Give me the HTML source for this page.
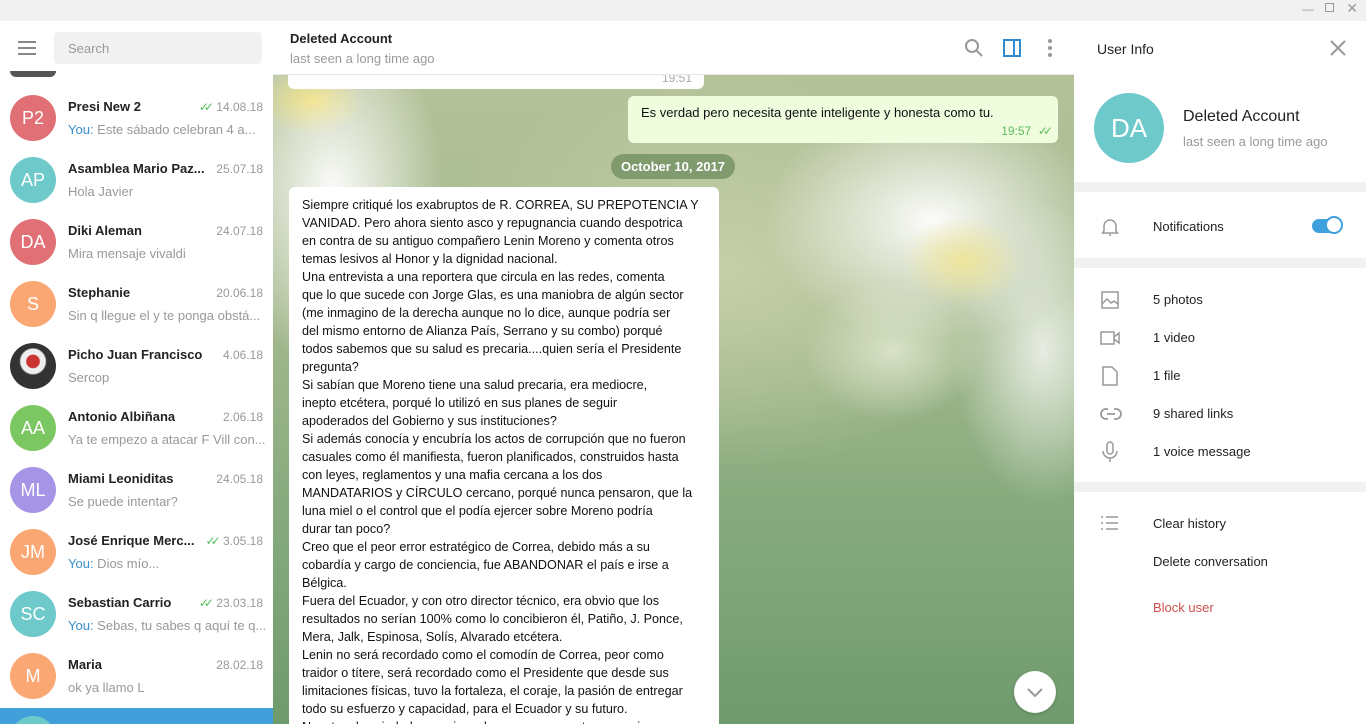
<!DOCTYPE html>
<html><head><meta charset="utf-8"><style>
*{margin:0;padding:0;box-sizing:border-box}
body{width:1366px;height:724px;overflow:hidden;font-family:"Liberation Sans",sans-serif;background:#fff;position:relative;font-size:13px;color:#000}
.tb{position:absolute;left:0;top:0;width:1366px;height:21px;background:#f1f1f1}
.left{position:absolute;left:0;top:21px;width:273px;height:703px;background:#fff;overflow:hidden}
.search{position:absolute;left:54px;top:11px;width:208px;height:32px;background:#f1f1f1;border-radius:4px;color:#999;font-size:13px;padding:9px 0 0 14px}
.ham{position:absolute;left:18px;top:20px;width:18px}
.ham i{display:block;height:2px;background:#888;margin-bottom:4px}
.row{position:absolute;left:0;width:273px;height:62px}
.av{position:absolute;left:10px;top:8px;width:46px;height:46px;border-radius:50%;color:#fff;font-size:18px;text-align:center;line-height:46px}
.nm{position:absolute;left:68px;top:12px;font-weight:bold;font-size:13px;color:#222;white-space:nowrap}
.dt{position:absolute;right:10px;top:13px;font-size:12px;color:#999}
.ms{position:absolute;left:68px;top:35px;font-size:13px;color:#999;white-space:nowrap;width:197px;overflow:hidden}
.ms b{font-weight:normal;color:#3a8fcf}
.ck{color:#4dbe56;font-size:12px;margin-right:4px;letter-spacing:-5px}
.chat{position:absolute;left:273px;top:21px;width:801px;height:703px;overflow:hidden;
background:
radial-gradient(ellipse 60px 45px at 690px 240px,rgba(240,228,150,.9),rgba(240,230,150,0) 100%),
radial-gradient(ellipse 170px 120px at 660px 200px,rgba(255,255,255,.95),rgba(255,255,255,0) 100%),
radial-gradient(ellipse 90px 150px at 770px 330px,rgba(255,255,255,.75),rgba(255,255,255,0) 100%),
radial-gradient(ellipse 90px 70px at 620px 330px,rgba(235,240,220,.7),rgba(255,255,255,0) 100%),
radial-gradient(ellipse 110px 180px at 60px 170px,rgba(255,255,255,.95),rgba(255,255,255,0) 100%),
radial-gradient(ellipse 50px 35px at 40px 80px,#e8d040,rgba(232,208,64,0) 100%),
radial-gradient(ellipse 300px 200px at 450px 250px,#c6cfa8,rgba(201,210,172,0) 100%),
linear-gradient(180deg,#b8c49c 0%,#a5b98e 40%,#86aa7d 70%,#6f9b6d 100%);}
.chat>div{position:absolute}
.hdr{left:0;top:0;width:801px;height:54px;background:#fff;border-bottom:1px solid #e6e6e6;z-index:3}
.bub{background:#fff;border-radius:6px;font-size:13px;line-height:18px;color:#111;overflow:hidden}
.right{position:absolute;left:1074px;top:21px;width:292px;height:703px;background:#fff}
.sep{position:absolute;left:0;width:292px;height:10px;background:#f1f1f1}
.it{position:absolute;left:79px;font-size:13px;color:#222}
.ic{position:absolute;left:26px}
</style></head><body>
<div class="tb"><span style="position:absolute;right:52px;top:2px;color:#999;font-size:12px">—</span><span style="position:absolute;right:32px;top:3px;width:9px;height:9px;border:1px solid #999"></span><span style="position:absolute;right:8px;top:0;color:#999;font-size:14px">✕</span></div>
<div class="left">
<div class="ham"><i></i><i></i><i></i></div>
<div class="search">Search</div>
<div style="position:absolute;left:10px;top:50px;width:46px;height:6px;border-radius:0 0 23px 23px;background:#555"></div>
<div class="row" style="top:66px"><div class="av" style="background:#e17076">P2</div><div class="nm">Presi New 2</div><div class="dt"><span class="ck">✓✓</span> 14.08.18</div><div class="ms"><b>You:</b> Este sábado celebran 4 a...</div></div>
<div class="row" style="top:128px"><div class="av" style="background:#6ec9cb">AP</div><div class="nm">Asamblea Mario Paz...</div><div class="dt">25.07.18</div><div class="ms">Hola Javier</div></div>
<div class="row" style="top:190px"><div class="av" style="background:#e17076">DA</div><div class="nm">Diki Aleman</div><div class="dt">24.07.18</div><div class="ms">Mira mensaje vivaldi</div></div>
<div class="row" style="top:252px"><div class="av" style="background:#faa774">S</div><div class="nm">Stephanie</div><div class="dt">20.06.18</div><div class="ms">Sin q llegue el y te ponga obstá...</div></div>
<div class="row" style="top:314px"><div class="av" style="background:radial-gradient(circle at 50% 40%,#c33 0 18%,#eee 20% 34%,#333 38%)"></div><div class="nm">Picho Juan Francisco</div><div class="dt">4.06.18</div><div class="ms">Sercop</div></div>
<div class="row" style="top:376px"><div class="av" style="background:#7bc862">AA</div><div class="nm">Antonio Albiñana</div><div class="dt">2.06.18</div><div class="ms">Ya te empezo a atacar F Vill con...</div></div>
<div class="row" style="top:438px"><div class="av" style="background:#a695e7">ML</div><div class="nm">Miami Leoniditas</div><div class="dt">24.05.18</div><div class="ms">Se puede intentar?</div></div>
<div class="row" style="top:500px"><div class="av" style="background:#faa774">JM</div><div class="nm">José Enrique Merc...</div><div class="dt"><span class="ck">✓✓</span> 3.05.18</div><div class="ms"><b>You:</b> Dios mío...</div></div>
<div class="row" style="top:562px"><div class="av" style="background:#6ec9cb">SC</div><div class="nm">Sebastian Carrio</div><div class="dt"><span class="ck">✓✓</span> 23.03.18</div><div class="ms"><b>You:</b> Sebas, tu sabes q aquí te q...</div></div>
<div class="row" style="top:624px"><div class="av" style="background:#faa774">M</div><div class="nm">Maria</div><div class="dt">28.02.18</div><div class="ms">ok ya llamo L</div></div>
<div class="row" style="top:687px;height:16px;background:#419fd9;overflow:hidden"><div class="av" style="background:#6ec9cb"></div></div>
</div>
<div class="chat">
<div class="hdr"><div style="position:absolute;left:17px;top:10px;font-size:13px;font-weight:bold;color:#222">Deleted Account</div><div style="position:absolute;left:17px;top:30px;color:#999">last seen a long time ago</div>
<svg style="position:absolute;left:691px;top:17px" width="20" height="20" fill="none" stroke="#999" stroke-width="2"><circle cx="8" cy="8" r="6"/><path d="M12.5 12.5L18 18"/></svg>
<svg style="position:absolute;left:729px;top:17px" width="20" height="20" fill="none" stroke="#2f8ad0" stroke-width="2"><rect x="2" y="2" width="16" height="16"/><path d="M12 2v16"/></svg>
<div style="position:absolute;left:775px;top:18px;width:4px"><i style="display:block;width:4px;height:4px;border-radius:2px;background:#999;margin-bottom:3px"></i><i style="display:block;width:4px;height:4px;border-radius:2px;background:#999;margin-bottom:3px"></i><i style="display:block;width:4px;height:4px;border-radius:2px;background:#999"></i></div></div>
<div class="bub" style="left:15px;top:40px;width:416px;height:28px"><span style="position:absolute;right:12px;top:8px;font-size:12px;color:#aaa">19:51</span></div>
<div class="bub" style="left:355px;top:75px;width:430px;height:47px;background:#effdde"><div style="position:absolute;left:13px;top:8px">Es verdad pero necesita gente inteligente y honesta como tu.</div><div style="position:absolute;right:10px;top:26px;font-size:12px;color:#5dbb5c">19:57 &nbsp;<span style="letter-spacing:-5px">✓✓</span></div></div>
<div style="left:338px;top:133px;width:124px;height:25px;border-radius:13px;background:rgba(110,140,95,.75);color:#fff;font-weight:bold;font-size:13px;text-align:center;line-height:25px">October 10, 2017</div>
<div class="bub" style="left:16px;top:166px;width:430px;height:537px;border-radius:6px 6px 0 0;padding:9px 13px;white-space:nowrap;font-size:12.6px">Siempre critiqué los exabruptos de R. CORREA, SU PREPOTENCIA Y<br>VANIDAD. Pero ahora siento asco y repugnancia cuando despotrica<br>en contra de su antiguo compañero Lenin Moreno y comenta otros<br>temas lesivos al Honor y la dignidad nacional.<br>Una entrevista a una reportera que circula en las redes,  comenta<br>que lo que sucede con Jorge Glas, es una maniobra de algún sector<br>(me inmagino de la derecha aunque no lo dice, aunque podría ser<br>del mismo entorno de Alianza País, Serrano y su combo) porqué<br>todos sabemos que su salud es precaria....quien sería el Presidente<br>pregunta?<br>Si sabían que Moreno tiene una salud precaria, era mediocre,<br>inepto etcétera,  porqué lo utilizó en sus planes de seguir<br>apoderados del Gobierno y sus instituciones?<br>Si además conocía y encubría los actos de corrupción que no fueron<br>casuales como él manifiesta, fueron planificados, construidos hasta<br>con leyes, reglamentos y una mafia cercana a los dos<br>MANDATARIOS y CÍRCULO cercano, porqué nunca pensaron, que la<br>luna miel o el control que el podía ejercer sobre Moreno podría<br>durar tan poco?<br>Creo que el peor error estratégico de Correa, debido más a su<br>cobardía y cargo de conciencia, fue ABANDONAR el país e irse a<br>Bélgica.<br>Fuera del Ecuador, y con otro director técnico, era obvio que los<br>resultados no serían 100% como lo concibieron él,  Patiño,  J. Ponce,<br>Mera, Jalk, Espinosa, Solís, Alvarado etcétera.<br>Lenin no será recordado como el comodín de Correa, peor como<br>traidor o títere, será recordado como el Presidente que desde sus<br>limitaciones físicas,  tuvo la fortaleza, el coraje, la pasión de entregar<br>todo su esfuerzo y capacidad,  para el Ecuador y su futuro.<br>Nosotros los ciudadanos, si ayudamos y con nuestra voz guiamos</div>
<div style="left:741px;top:650px;width:42px;height:42px;border-radius:50%;background:#fff;box-shadow:0 1px 3px rgba(0,0,0,.2)"><svg width="42" height="42" fill="none" stroke="#999" stroke-width="2"><path d="M14 18l7 7 7-7"/></svg></div>
</div>
<div class="right">
<div style="position:absolute;left:23px;top:20px;font-size:14px;color:#222">User Info</div>
<svg style="position:absolute;left:256px;top:19px" width="16" height="16" stroke="#999" stroke-width="2"><path d="M1 1l14 14M15 1L1 15"/></svg>
<div style="position:absolute;left:20px;top:72px;width:70px;height:70px;border-radius:50%;background:#6ec9cb;color:#fff;font-size:26px;text-align:center;line-height:70px">DA</div>
<div style="position:absolute;left:109px;top:87px;font-size:16px;color:#222">Deleted Account</div>
<div style="position:absolute;left:109px;top:113px;color:#999">last seen a long time ago</div>
<div class="sep" style="top:161px"></div>
<svg class="ic" style="top:196px" width="20" height="20" fill="none" stroke="#999" stroke-width="1.5"><path d="M4 14V9a6 6 0 0112 0v5l1.5 2h-15zM9 18h2"/></svg>
<div class="it" style="top:198px">Notifications</div>
<div style="position:absolute;left:238px;top:198px;width:30px;height:14px;border-radius:7px;background:#3fa0de"></div>
<div style="position:absolute;left:251px;top:195px;width:18px;height:18px;border-radius:50%;background:#fff;border:2px solid #3fa0de"></div>
<div class="sep" style="top:237px"></div>
<svg class="ic" style="top:269px" width="20" height="20" fill="none" stroke="#999" stroke-width="1.5"><rect x="2" y="2" width="16" height="16"/><path d="M2 14l5-5 4 4 3-2 4 3"/></svg><div class="it" style="top:271px">5 photos</div>
<svg class="ic" style="top:307px" width="22" height="20" fill="none" stroke="#999" stroke-width="1.5"><rect x="1" y="4" width="13" height="12"/><path d="M14 9l5-4v10l-5-4"/></svg><div class="it" style="top:309px">1 video</div>
<svg class="ic" style="top:345px" width="20" height="20" fill="none" stroke="#999" stroke-width="1.5"><path d="M3 1h9l5 5v13H3z"/></svg><div class="it" style="top:347px">1 file</div>
<svg class="ic" style="top:383px" width="22" height="20" fill="none" stroke="#999" stroke-width="1.8"><path d="M8 5H6a5 5 0 000 10h2M14 5h2a5 5 0 010 10h-2M7 10h8"/></svg><div class="it" style="top:385px">9 shared links</div>
<svg class="ic" style="top:420px" width="20" height="22" fill="none" stroke="#999" stroke-width="1.5"><rect x="7" y="1" width="6" height="12" rx="3"/><path d="M3 10a7 7 0 0014 0M10 17v4"/></svg><div class="it" style="top:423px">1 voice message</div>
<div class="sep" style="top:461px"></div>
<svg class="ic" style="top:494px" width="20" height="16" fill="none" stroke="#999" stroke-width="1.5"><path d="M1 2h2M6 2h12M1 8h2M6 8h12M1 14h2M6 14h12"/></svg><div class="it" style="top:495px">Clear history</div>
<div class="it" style="top:533px">Delete conversation</div>
<div class="it" style="top:579px;color:#d14e4e">Block user</div>
</div>
</body></html>
